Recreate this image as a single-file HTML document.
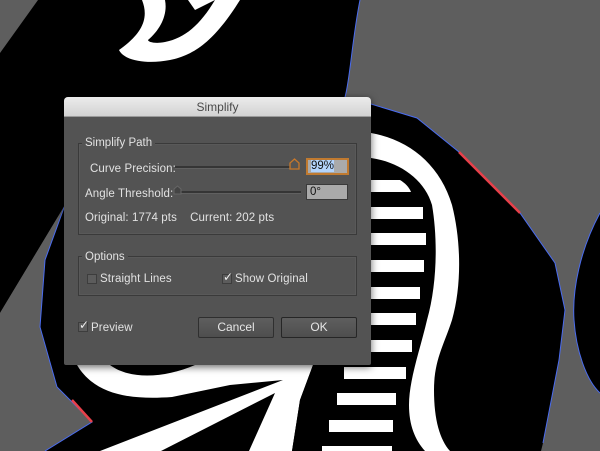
<!DOCTYPE html>
<html><head><meta charset="utf-8"><style>
*{margin:0;padding:0;box-sizing:border-box}
body{width:600px;height:451px;overflow:hidden;background:#5e5e5e;position:relative;font-family:"Liberation Sans",sans-serif}
svg.bg{position:absolute;left:0;top:0}
.dlg{position:absolute;left:64px;top:97px;width:307px;height:268px;background:#535353;border-radius:4px 4px 2px 2px;box-shadow:0 2px 8px rgba(0,0,0,.6);overflow:hidden}
.tb{height:20px;background:linear-gradient(#ececec,#d2d2d2);border-bottom:1px solid #9a9a9a;text-align:center;font-size:12px;line-height:20px;color:#4a4a4a}
.t{position:absolute;color:#e2e2e2;font-size:11.5px;white-space:nowrap;letter-spacing:.1px}
.grp{position:absolute;border:1px solid #3a3a3a;box-shadow:inset 0 0 0 1px rgba(255,255,255,.04)}
.lg{position:absolute;background:#535353;padding:0 3px;color:#e2e2e2;font-size:11.5px}
.track{position:absolute;height:3px;background:#353535;border-bottom:1px solid #606060}
.inp{position:absolute;background:#aaaaaa;border:1px solid #3a3a3a;font-size:11.5px;color:#111;padding-left:3px;line-height:15px}
.cb{position:absolute;width:10px;height:10px;background:#5c5c5c;border:1px solid #3d3d3d}
.btn{position:absolute;height:21px;background:linear-gradient(#5e5e5e,#4e4e4e);border:1px solid #2f2f2f;border-radius:2px;color:#e6e6e6;font-size:12px;text-align:center;line-height:19px}
.ck{position:absolute;color:#eee;font-size:12px;line-height:10px}
</style></head><body>
<svg class="bg" width="600" height="451" viewBox="0 0 600 451">
<path d="M38 0 L360 0 C352 40 350 80 345 97 L371 104 L417 118 L459 152 L520 213 L555 263 L565 310 L559 360 L543 443 L541 451 L0 451 L0 53 Z" fill="#000"/>
<path d="M0 313 L65 205 L45 260 L40 327 L57 387 L92 422 L45 451 L0 451 Z" fill="#5e5e5e"/>
<path d="M600 213 C580 250 572 290 574 320 C576 350 586 380 600 393 Z" fill="#000"/>
<path d="M142 0 C150 20 140 35 119 50 C125 62 150 64 170 60 C195 55 215 40 240 0 L215 0 C200 25 185 38 165 42 C155 44 148 42 148 40 C160 30 168 15 165 0 Z" fill="#fff"/>
<path d="M188 0 L195 10 L215 0 Z" fill="#fff"/>
<!-- white region below dialog -->
<path d="M77 365 L313 365 L300 400 L292 451 L100 451 Z" fill="#fff"/>
<path d="M110 365 C130 380 165 378 195 365 Z" fill="#000"/>
<path d="M77 365 C95 395 130 400 172 397 L230 385 L283 380 L100 451 L50 451 Z" fill="#000"/>
<path d="M275 393 L161 451 L249 451 Z" fill="#000"/>
<path d="M313 365 L350 365 L335 451 L292 451 L300 400 Z" fill="#000"/>
<path d="M0 313 L65 205 L45 260 L40 327 L57 387 L92 422 L45 451 L0 451 Z" fill="#5e5e5e"/>
<g fill="#fff">
<path d="M371 180 L400 180 C405 183 409 187 411 192 L371 192 Z"/><rect x="371" y="207" width="52" height="12"/>
<rect x="371" y="233" width="55" height="12"/><rect x="371" y="260" width="53" height="12"/>
<rect x="371" y="287" width="49" height="12"/><rect x="371" y="313" width="45" height="12"/>
<rect x="371" y="340" width="41" height="12"/><rect x="344" y="367" width="62" height="12"/>
<rect x="337" y="393" width="59" height="12"/><rect x="329" y="420" width="64" height="12"/>
<rect x="322" y="446" width="70" height="8"/>
</g>
<path d="M371 133 C410 140 440 165 452 205 C461 240 462 285 452 320 C444 345 434 360 434 390 C434 420 440 440 450 451 L425 451 C415 440 409 425 409 405 C409 380 420 350 427 320 C437 285 438 240 432 205 C425 180 400 162 371 158 Z" fill="#fff"/>
<g fill="none" stroke="#4a6cf0" stroke-width="1">
<path d="M360 0 C352 40 350 80 345 97 M371 104 L417 118 L459 152 L520 213 L555 263 L565 310 L559 360 L543 443"/>
<path d="M65 205 L45 260 L40 327 L57 387 L92 422 L45 451"/>
<path d="M600 213 C580 250 572 290 574 320 C576 350 586 380 600 393"/>
</g>
<g stroke="#e8404a" stroke-width="2.5"><path d="M459 152 L520 213"/><path d="M72 400 L92 422"/></g>
</svg>
<div class="dlg">
<div class="tb">Simplify</div>
<div class="grp" style="left:14px;top:46px;width:279px;height:92px"></div>
<div class="lg" style="left:18px;top:40px">Simplify Path</div>
<div class="t" style="left:26px;top:66px">Curve Precision:</div>
<div class="track" style="left:111px;top:69px;width:120px"></div>
<svg style="position:absolute;left:225px;top:61px" width="11" height="12"><path d="M1 11 L1 5 L5.5 1 L10 5 L10 11 Z" fill="#555" stroke="#c8782a" stroke-width="1.3"/></svg>
<div class="inp" style="left:242px;top:61px;width:43px;height:17px;border:2px solid #c07a30;line-height:13px"><span style="background:#b3d4fc">99%</span></div>
<div class="t" style="left:21px;top:91px">Angle Threshold:</div>
<div class="track" style="left:113px;top:94px;width:124px"></div>
<svg style="position:absolute;left:109px;top:88px" width="9" height="10"><path d="M1 9 L1 4 L4.5 1 L8 4 L8 9 Z" fill="#444" stroke="#666"/></svg>
<div class="inp" style="left:242px;top:87px;width:42px;height:16px">0°</div>
<div class="t" style="left:21px;top:115px">Original: 1774 pts&nbsp;&nbsp;&nbsp;&nbsp;Current: 202 pts</div>
<div class="grp" style="left:14px;top:159px;width:279px;height:40px"></div>
<div class="lg" style="left:18px;top:154px">Options</div>
<div class="cb" style="left:23px;top:177px"></div>
<div class="t" style="left:36px;top:176px">Straight Lines</div>
<div class="cb" style="left:158px;top:177px"></div><div class="ck" style="left:159px;top:175px">✓</div>
<div class="t" style="left:171px;top:176px">Show Original</div>
<div class="cb" style="left:14px;top:225px"></div><div class="ck" style="left:15px;top:223px">✓</div>
<div class="t" style="left:27px;top:225px">Preview</div>
<div class="btn" style="left:134px;top:220px;width:76px">Cancel</div>
<div class="btn" style="left:217px;top:220px;width:76px;border-color:#262626">OK</div>
</div>
</body></html>
